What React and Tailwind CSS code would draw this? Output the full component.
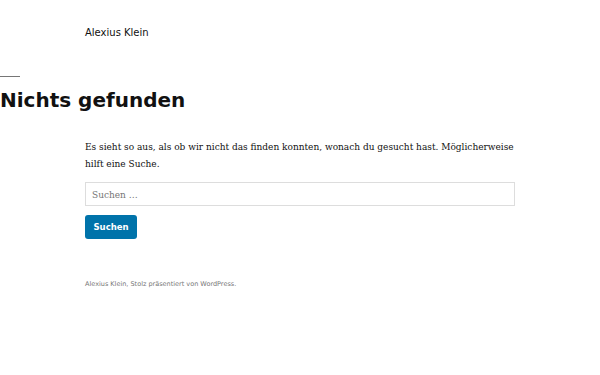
const sans = { fontFamily: '"DejaVu Sans", sans-serif' };

export default function App() {
  return (
    <div className="min-h-[375px] bg-white text-[#111]" style={sans}>
      <header className="pl-[85px] pt-[26px]">
        <p className="text-[10px] leading-[14px] text-[#111]">Alexius Klein</p>
      </header>

      <main className="mt-[36px]">
        <div className="w-[20px] border-t border-[#767676]" />
        <h1 className="mt-[10px] text-[20px] font-bold leading-[26px] text-[#111]">Nichts gefunden</h1>

        <div className="ml-[85px] mt-[25px] w-[430px] font-['DejaVu_Serif_Condensed','DejaVu_Serif',serif]">
          <p className="text-[10px] leading-[17px] text-[#111]">
            Es sieht so aus, als ob wir nicht das finden konnten, wonach du gesucht hast. Möglicherweise hilft eine Suche.
          </p>
          <form className="mt-[10px] flex flex-col items-start gap-[9px]">
            <input
              type="search"
              placeholder="Suchen …"
              className="h-[24px] w-[430px] border border-[#ddd] px-[6px] text-[10px] text-[#111] placeholder:text-[#767676] outline-none font-['DejaVu_Serif_Condensed','DejaVu_Serif',serif]"
            />
            <button
              type="button"
              className="h-[24px] w-[52px] rounded-[3px] bg-[#0073aa] text-[8.5px] font-bold text-white font-['DejaVu_Sans',sans-serif]"
            >
              Suchen
            </button>
          </form>
        </div>
      </main>

      <footer className="ml-[85px] mt-[40px]">
        <p className="text-[6.5px] leading-[10px] text-[#767676]">Alexius Klein, Stolz präsentiert von WordPress.</p>
      </footer>
    </div>
  );
}
